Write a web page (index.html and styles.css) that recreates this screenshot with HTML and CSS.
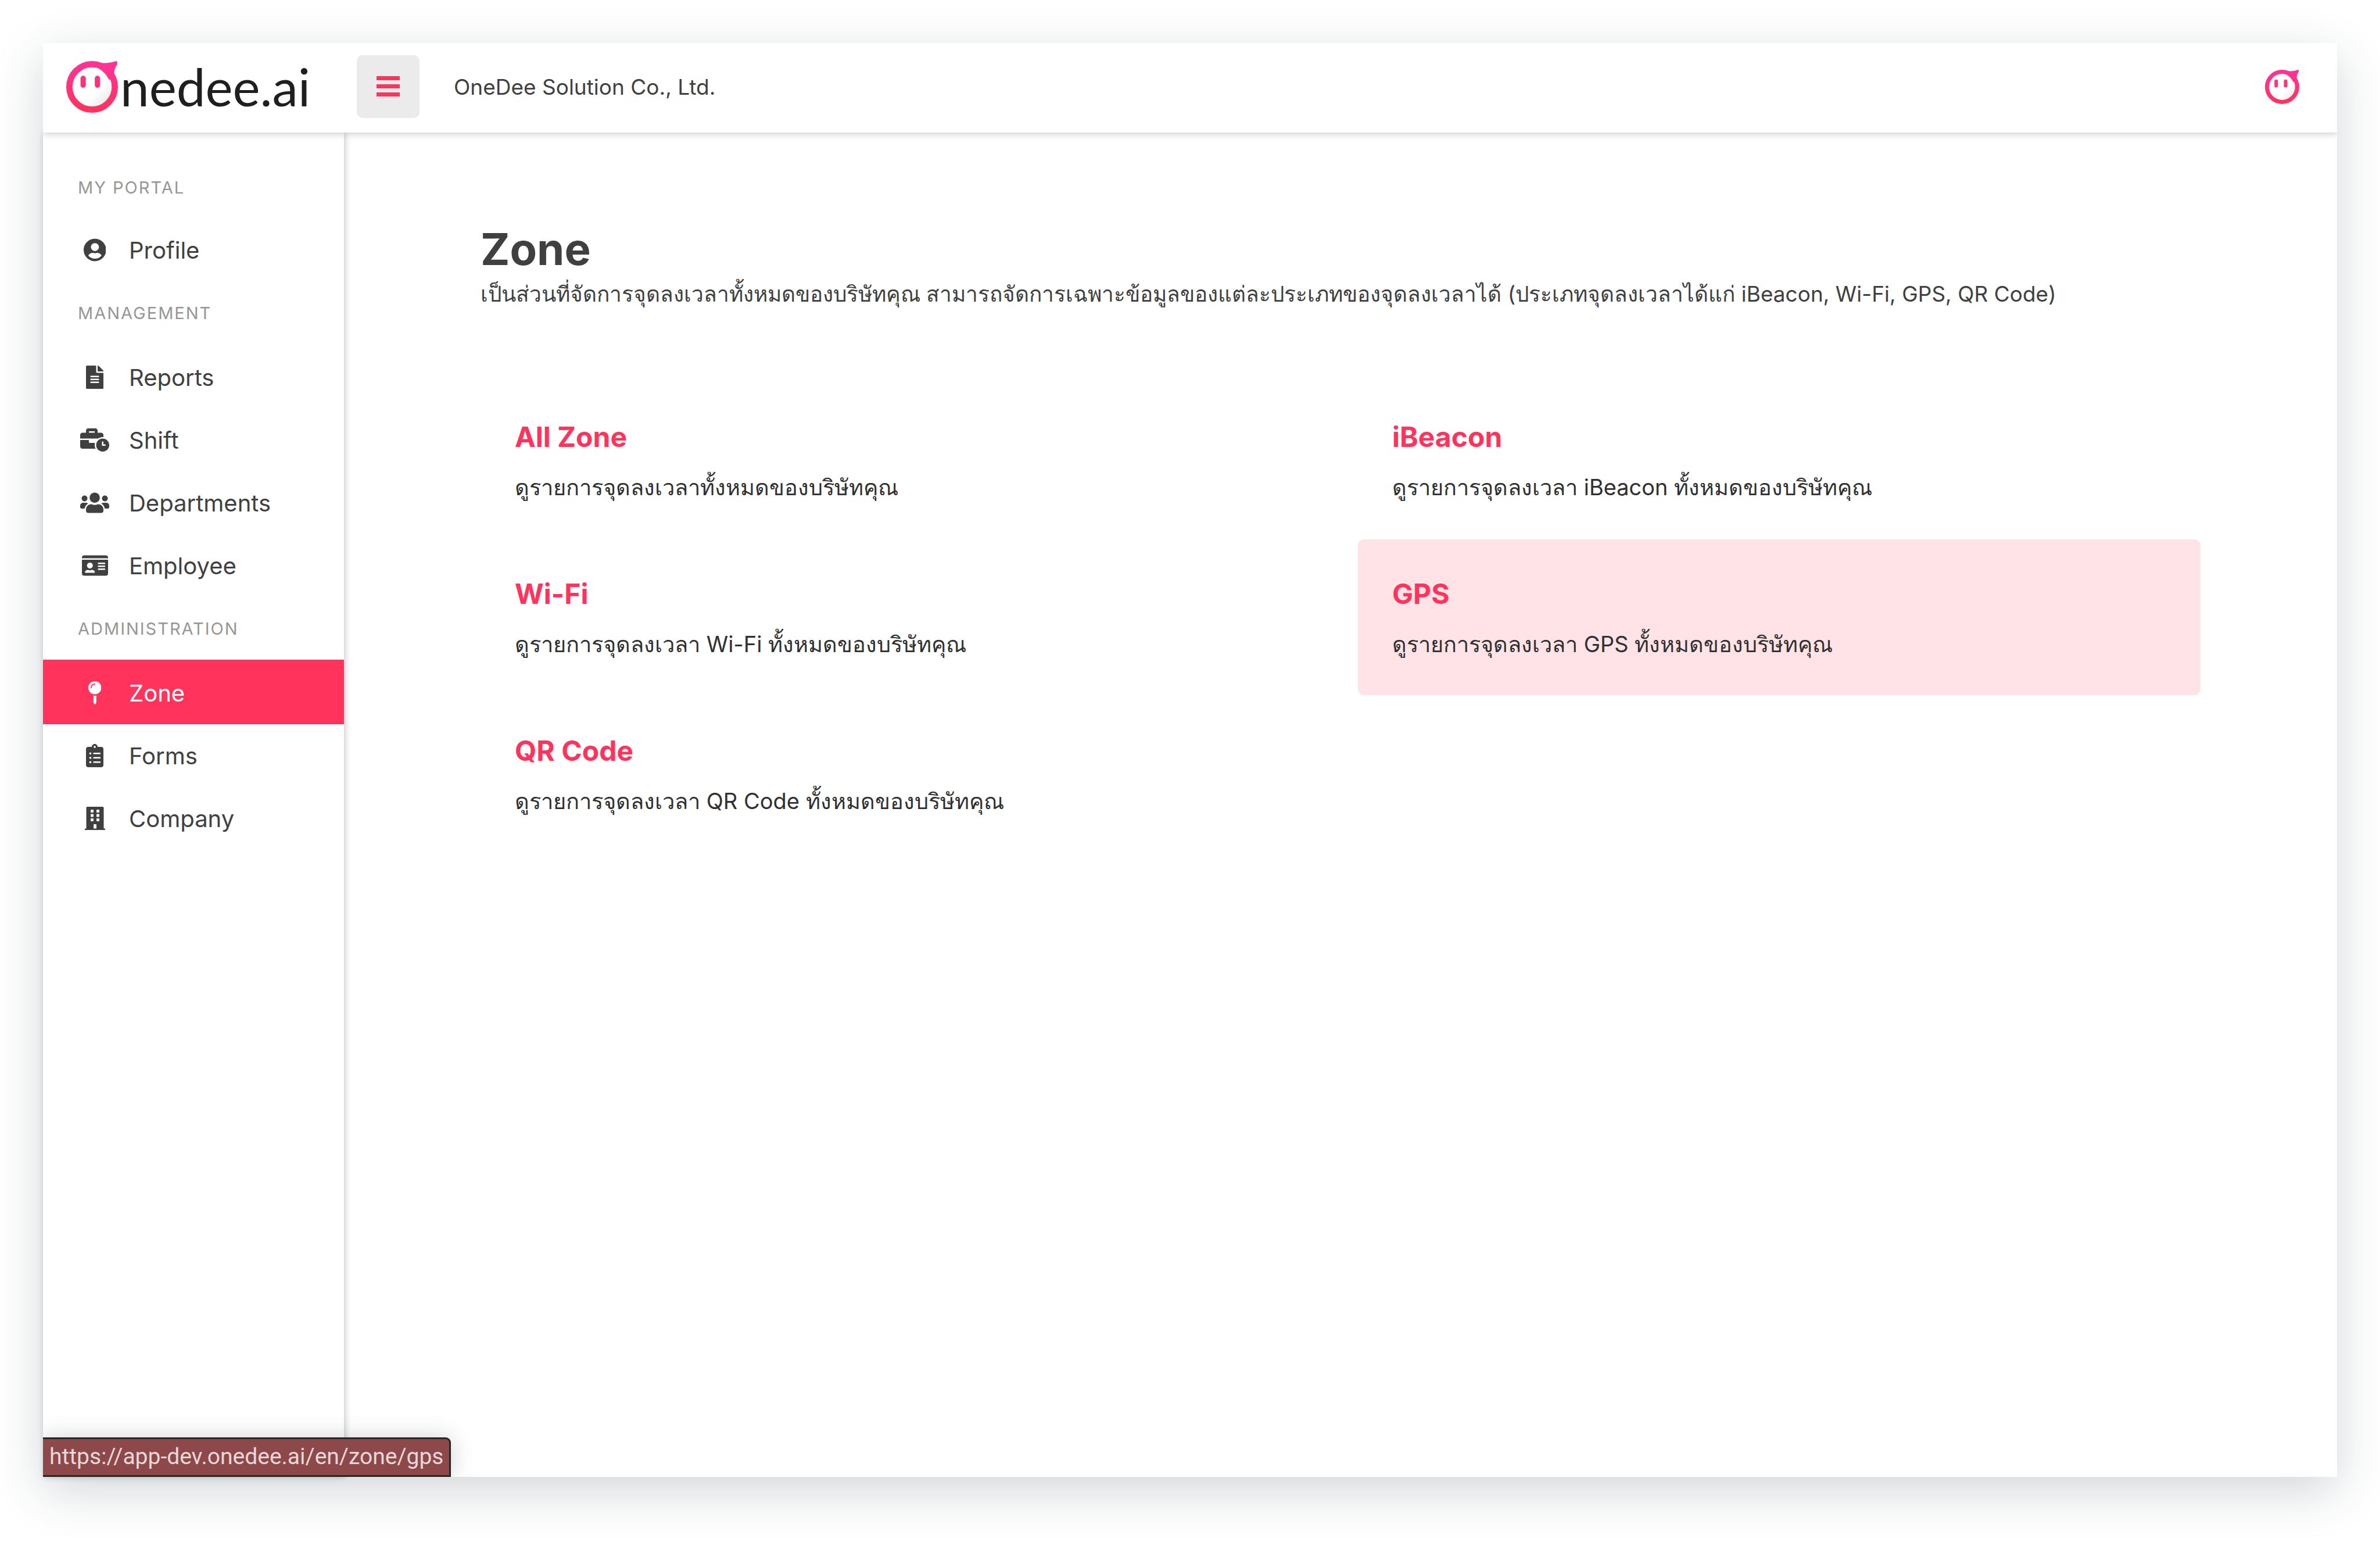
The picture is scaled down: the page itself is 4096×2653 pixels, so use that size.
FILE: index.html
```html
<!DOCTYPE html>
<html lang="en">
<head>
<meta charset="utf-8">
<title>Zone – Onedee.ai</title>
<link rel="stylesheet" href="styles.css">
</head>
<body>
<div class="window">
  <header class="topbar">
    <a class="brand" href="#" aria-label="Onedee.ai">
      <svg class="brand-mark" viewBox="0 0 116 116" aria-hidden="true">
        <defs>
          <linearGradient id="pink" x1="0" y1="0" x2="0" y2="116" gradientUnits="userSpaceOnUse">
            <stop offset="0" stop-color="#ff3399"/>
            <stop offset="1" stop-color="#ff335c"/>
          </linearGradient>
          <linearGradient id="face" x1="0" y1="0" x2="1" y2="1">
            <stop offset=".6" stop-color="#fff"/>
            <stop offset="1" stop-color="#dcdcdc"/>
          </linearGradient>
        </defs>
        <g id="mascot">
          <circle cx="58" cy="58" r="51" fill="url(#face)" stroke="url(#pink)" stroke-width="14"/>
          <path fill="url(#pink)" d="M64 1C80 7 98 5 112 0Q116 1 114 8C108 16 106 26 109 40L96 42C88 26 78 18 62 12Z"/>
          <rect x="32" y="33" width="12" height="27" rx="6" fill="url(#pink)"/>
          <rect x="64" y="33" width="12" height="27" rx="6" fill="url(#pink)"/>
        </g>
      </svg>
      <span class="brand-name">nedee.ai</span>
    </a>
    <button class="menu-toggle" type="button" aria-label="Toggle menu">
      <svg viewBox="0 0 40 36" aria-hidden="true"><path d="M0 0h40v7H0zM0 14h40v7H0zM0 28h40v7H0z"/></svg>
    </button>
    <span class="company">OneDee Solution Co., Ltd.</span>
    <a class="avatar" href="#" aria-label="Account"><svg viewBox="0 0 116 116" aria-hidden="true"><use href="#mascot"/></svg></a>
  </header>

  <div class="body">
    <nav class="sidebar">
      <section class="nav-section">
        <h2 class="nav-label">MY PORTAL</h2>
        <a class="nav-item" href="#">
          <span class="nav-icon"><svg viewBox="0 0 496 512"><path d="M248 8C111 8 0 119 0 256s111 248 248 248 248-111 248-248S385 8 248 8zm0 96c48.600 0 88 39.400 88 88s-39.400 88-88 88-88-39.400-88-88 39.400-88 88-88zm0 344c-58.700 0-111.300-26.600-146.500-68.200 18.800-35.400 55.600-59.800 98.500-59.800 2.400 0 4.800.4 7.100 1.100 13 4.200 26.600 6.900 40.900 6.900 14.300 0 28-2.700 40.900-6.900 2.300-.7 4.700-1.100 7.100-1.100 42.900 0 79.700 24.400 98.500 59.800C359.300 421.400 306.700 448 248 448z"/></svg></span>Profile</a>
      </section>
      <section class="nav-section">
        <h2 class="nav-label">MANAGEMENT</h2>
        <a class="nav-item" href="#">
          <span class="nav-icon"><svg viewBox="0 0 384 512"><path d="M224 136V0H24C10.700 0 0 10.700 0 24v464c0 13.300 10.700 24 24 24h336c13.300 0 24-10.700 24-24V160H248c-13.200 0-24-10.800-24-24zm64 236c0 6.600-5.400 12-12 12H108c-6.600 0-12-5.400-12-12v-8c0-6.600 5.400-12 12-12h168c6.600 0 12 5.400 12 12v8zm0-64c0 6.600-5.400 12-12 12H108c-6.600 0-12-5.400-12-12v-8c0-6.600 5.400-12 12-12h168c6.600 0 12 5.400 12 12v8zm0-72v8c0 6.600-5.400 12-12 12H108c-6.600 0-12-5.400-12-12v-8c0-6.600 5.400-12 12-12h168c6.600 0 12 5.400 12 12zm96-114.100v6.100H256V0h6.100c6.400 0 12.500 2.500 17 7l97.900 98c4.500 4.500 7 10.600 7 16.900z"/></svg></span>Reports</a>
        <a class="nav-item" href="#">
          <span class="nav-icon"><svg viewBox="0 0 640 512"><path d="M496 224c-79.590 0-144 64.410-144 144s64.410 144 144 144 144-64.410 144-144-64.410-144-144-144zm64 150.290c0 5.340-4.370 9.710-9.710 9.710h-60.570c-5.340 0-9.710-4.370-9.710-9.710v-76.570c0-5.340 4.370-9.710 9.710-9.710h12.570c5.340 0 9.710 4.370 9.710 9.710V352h38.290c5.340 0 9.710 4.370 9.710 9.710v12.580zM496 192c5.400 0 10.720.33 16 .81V144c0-25.600-22.400-48-48-48h-80V48c0-25.600-22.400-48-48-48H176c-25.600 0-48 22.400-48 48v48H48c-25.600 0-48 22.400-48 48v80h395.120c28.600-20.090 63.350-32 100.880-32zM320 96H192V64h128v32zm6.820 224H208c-8.840 0-16-7.160-16-16v-48H0v144c0 25.600 22.400 48 48 48h291.430C327.100 423.960 320 396.820 320 368c0-16.660 2.480-32.720 6.820-48z"/></svg></span>Shift</a>
        <a class="nav-item" href="#">
          <span class="nav-icon"><svg viewBox="0 0 640 512"><path d="M96 224c35.300 0 64-28.700 64-64s-28.700-64-64-64-64 28.700-64 64 28.700 64 64 64zm448 0c35.300 0 64-28.700 64-64s-28.700-64-64-64-64 28.700-64 64 28.700 64 64 64zm32 32h-64c-17.600 0-33.500 7.100-45.100 18.600 40.300 22.100 68.900 62 75.100 109.400h66c17.700 0 32-14.300 32-32v-32c0-35.300-28.700-64-64-64zm-256 0c61.900 0 112-50.100 112-112S381.900 32 320 32 208 82.100 208 144s50.100 112 112 112zm76.800 32h-8.300c-20.800 10-43.900 16-68.500 16s-47.600-6-68.500-16h-8.300C179.600 288 128 339.600 128 403.200V432c0 26.500 21.500 48 48 48h288c26.500 0 48-21.500 48-48v-28.800c0-63.600-51.600-115.200-115.200-115.200zm-223.700-13.400C161.500 263.100 145.600 256 128 256H64c-35.300 0-64 28.700-64 64v32c0 17.700 14.300 32 32 32h65.900c6.300-47.400 34.900-87.300 75.200-109.400z"/></svg></span>Departments</a>
        <a class="nav-item" href="#">
          <span class="nav-icon"><svg viewBox="0 0 576 512"><path d="M528 32H48C21.500 32 0 53.500 0 80v16h576V80c0-26.500-21.500-48-48-48zM0 432c0 26.500 21.500 48 48 48h480c26.500 0 48-21.500 48-48V128H0v304zm352-232c0-4.400 3.600-8 8-8h144c4.400 0 8 3.600 8 8v16c0 4.400-3.600 8-8 8H360c-4.400 0-8-3.600-8-8v-16zm0 64c0-4.400 3.600-8 8-8h144c4.400 0 8 3.600 8 8v16c0 4.400-3.600 8-8 8H360c-4.400 0-8-3.600-8-8v-16zm0 64c0-4.400 3.600-8 8-8h144c4.400 0 8 3.600 8 8v16c0 4.400-3.600 8-8 8H360c-4.400 0-8-3.600-8-8v-16zM176 192c35.300 0 64 28.700 64 64s-28.700 64-64 64-64-28.700-64-64 28.700-64 64-64zM67.100 396.200C75.500 370.500 99.600 352 128 352h8.200c12.300 5.100 25.700 8 39.800 8s27.600-2.900 39.800-8h8.200c28.400 0 52.500 18.500 60.900 44.200 3.200 9.900-5.200 19.800-15.600 19.800H82.700c-10.400 0-18.800-10-15.600-19.800z"/></svg></span>Employee</a>
      </section>
      <section class="nav-section">
        <h2 class="nav-label">ADMINISTRATION</h2>
        <a class="nav-item nav-item-active" href="#" aria-current="page">
          <span class="nav-icon"><svg viewBox="0 0 288 512"><path d="M112 316.940v156.690l22.020 33.020c4.750 7.120 15.220 7.120 19.970 0L176 473.630V316.940c-10.390 1.920-21.060 3.060-32 3.060s-21.610-1.140-32-3.060zM144 0C64.470 0 0 64.470 0 144s64.470 144 144 144 144-64.470 144-144S223.530 0 144 0zm0 76c-37.500 0-68 30.500-68 68 0 6.620-5.380 12-12 12s-12-5.380-12-12c0-50.730 41.280-92 92-92 6.620 0 12 5.380 12 12s-5.380 12-12 12z"/></svg></span>Zone</a>
        <a class="nav-item" href="#">
          <span class="nav-icon"><svg viewBox="0 0 384 512"><path d="M336 64h-80c0-35.300-28.700-64-64-64s-64 28.700-64 64H48C21.500 64 0 85.500 0 112v352c0 26.500 21.500 48 48 48h288c26.500 0 48-21.500 48-48V112c0-26.500-21.500-48-48-48zM96 424c-13.300 0-24-10.700-24-24s10.700-24 24-24 24 10.700 24 24-10.700 24-24 24zm0-96c-13.300 0-24-10.700-24-24s10.700-24 24-24 24 10.700 24 24-10.700 24-24 24zm0-96c-13.300 0-24-10.700-24-24s10.700-24 24-24 24 10.700 24 24-10.700 24-24 24zm96-192c13.300 0 24 10.700 24 24s-10.700 24-24 24-24-10.700-24-24 10.700-24 24-24zm128 368c0 4.400-3.600 8-8 8H168c-4.400 0-8-3.600-8-8v-16c0-4.400 3.600-8 8-8h144c4.400 0 8 3.600 8 8v16zm0-96c0 4.400-3.600 8-8 8H168c-4.400 0-8-3.600-8-8v-16c0-4.400 3.600-8 8-8h144c4.400 0 8 3.600 8 8v16zm0-96c0 4.400-3.600 8-8 8H168c-4.400 0-8-3.600-8-8v-16c0-4.400 3.600-8 8-8h144c4.400 0 8 3.600 8 8v16z"/></svg></span>Forms</a>
        <a class="nav-item" href="#">
          <span class="nav-icon"><svg viewBox="0 0 448 512"><path fill-rule="evenodd" d="M436 480h-20V24c0-13-11-24-24-24H56C43 0 32 11 32 24v456H12c-7 0-12 5-12 12v20h448v-20c0-7-5-12-12-12zM140 64h40q12 0 12 12v40q0 12-12 12h-40q-12 0-12-12V76q0-12 12-12zM268 64h40q12 0 12 12v40q0 12-12 12h-40q-12 0-12-12V76q0-12 12-12zM140 160h40q12 0 12 12v40q0 12-12 12h-40q-12 0-12-12v-40q0-12 12-12zM268 160h40q12 0 12 12v40q0 12-12 12h-40q-12 0-12-12v-40q0-12 12-12zM140 256h40q12 0 12 12v40q0 12-12 12h-40q-12 0-12-12v-40q0-12 12-12zM268 256h40q12 0 12 12v40q0 12-12 12h-40q-12 0-12-12v-40q0-12 12-12zM204 384h40q12 0 12 12v84h-64v-84q0-12 12-12z"/></svg></span>Company</a>
      </section>
    </nav>

    <main class="main">
      <div class="content">
        <h1 class="title">Zone</h1>
        <p class="subtitle" lang="th">เป็นส่วนที่จัดการจุดลงเวลาทั้งหมดของบริษัทคุณ สามารถจัดการเฉพาะข้อมูลของแต่ละประเภทของจุดลงเวลาได้ (ประเภทจุดลงเวลาได้แก่ iBeacon, Wi-Fi, GPS, QR Code)</p>
        <div class="cards">
          <a class="card" href="#"><h2 class="card-title">All Zone</h2><p class="card-text" lang="th">ดูรายการจุดลงเวลาทั้งหมดของบริษัทคุณ</p></a>
          <a class="card" href="#"><h2 class="card-title">iBeacon</h2><p class="card-text" lang="th">ดูรายการจุดลงเวลา iBeacon ทั้งหมดของบริษัทคุณ</p></a>
          <a class="card" href="#"><h2 class="card-title">Wi-Fi</h2><p class="card-text" lang="th">ดูรายการจุดลงเวลา Wi-Fi ทั้งหมดของบริษัทคุณ</p></a>
          <a class="card card-hover" href="#"><h2 class="card-title">GPS</h2><p class="card-text" lang="th">ดูรายการจุดลงเวลา GPS ทั้งหมดของบริษัทคุณ</p></a>
          <a class="card" href="#"><h2 class="card-title">QR Code</h2><p class="card-text" lang="th">ดูรายการจุดลงเวลา QR Code ทั้งหมดของบริษัทคุณ</p></a>
        </div>
      </div>
    </main>
  </div>
  <div class="status">https://app-dev.onedee.ai/en/zone/gps</div>
</div>
</body>
</html>
```
FILE: styles.css
```css
* { box-sizing: border-box; margin: 0; }

body {
  min-height: 100vh;
  display: flex;
  padding: 74px 74px 112px;
  background: #fff;
  color: #404040;
  font-family: Inter, sans-serif;
  font-size: 40px;
}

a { color: inherit; text-decoration: none; }
svg { display: block; fill: currentColor; }

.window {
  position: relative;
  flex: 1;
  display: flex;
  flex-direction: column;
  background: #fff;
  box-shadow: 0 24px 80px rgba(30, 50, 60, .2);
}

.topbar {
  position: relative;
  z-index: 1;
  display: flex;
  align-items: center;
  height: 154px;
  padding: 0 65px 4px 40px;
  background: #fff;
  box-shadow: 0 2px 12px rgba(0, 0, 0, .22);
  clip-path: inset(0 0 -20px 0);
}

.brand { display: flex; align-items: center; width: 500px; }
.brand-mark { width: 89px; height: 89px; }
.brand-name {
  margin-left: 4px;
  color: #1f1f1f;
  font-family: Lato, Inter, sans-serif;
  font-size: 89px;
  line-height: 90px;
}

.menu-toggle {
  display: grid;
  place-items: center;
  width: 108px;
  height: 108px;
  padding: 0;
  border: 0;
  border-radius: 10px;
  background: #ebebeb;
  color: #ff335c;
}
.menu-toggle svg { width: 40px; height: 36px; }

.company { margin-left: 59px; font-size: 37px; }
.avatar { margin-left: auto; }
.avatar svg { width: 59px; height: 59px; }

.body { flex: 1; display: flex; }

.sidebar {
  width: 518px;
  padding-top: 40px;
  box-shadow: 2px 0 10px rgba(0, 0, 0, .22);
}
.nav-label {
  height: 108px;
  padding-left: 60px;
  color: #969696;
  font-size: 29px;
  font-weight: 400;
  line-height: 110px;
  letter-spacing: 2px;
}
.nav-section + .nav-section .nav-label { height: 111px; }
.nav-item {
  display: flex;
  align-items: center;
  height: 108px;
  padding-left: 60px;
}
.nav-item-active {
  background: #ff335c;
  box-shadow: 0 -3px 0 #ff335c;
  color: #fff;
}
.nav-icon {
  display: flex;
  justify-content: center;
  width: 58px;
  margin-right: 30px;
}
.nav-icon svg { height: 40px; }

.main { flex: 1; padding: 154px 60px 60px; }
.content { max-width: 2960px; margin: 0 auto; }
.title { font-size: 76px; line-height: 92px; }
.subtitle {
  margin-bottom: 120px;
  font-size: 37px;
  line-height: 64px;
}

.cards {
  display: grid;
  grid-template-columns: 1fr 1fr;
  gap: 2px 60px;
}
.card {
  min-height: 268px;
  padding: 64px 59px 48px;
  border-radius: 10px;
  color: #303030;
}
.card-hover { background: #ffe3e7; }
.card-title {
  margin-bottom: 24px;
  color: #ff335c;
  font-size: 48px;
  font-weight: 700;
  line-height: 60px;
}
.card-text { font-size: 38px; line-height: 64px; }

.status {
  position: absolute;
  left: 0;
  bottom: 0;
  height: 68px;
  padding: 0 10px 0 11px;
  border: solid #252727;
  border-width: 3px 3px 3px 0;
  border-radius: 0 9px 0 0;
  background: #8d4849;
  box-shadow: 0 0 40px rgba(0, 0, 0, .18);
  clip-path: inset(-100px -100px 0 0);
  color: #ead7d9;
  font-family: Roboto, sans-serif;
  font-size: 39px;
  line-height: 60px;
}
```
